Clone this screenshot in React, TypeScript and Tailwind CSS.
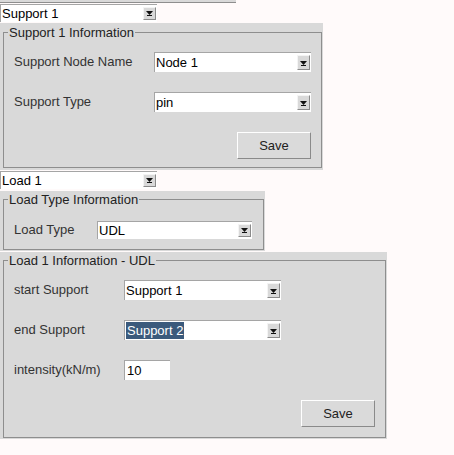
import type { ReactNode } from 'react';

/** Dropdown box with the little bevelled arrow button on the right */
function Combo({
  value,
  className,
  highlight = false,
}: {
  value: string;
  className: string;
  highlight?: boolean;
}) {
  return (
    <div className={`flex bg-white border-t border-l border-[#a5a5a5] ${className}`}>
      <div className="flex-1 flex items-center pl-[1px] overflow-hidden">
        {highlight ? (
          <span className="bg-[#3b5a7c] text-white leading-[17px] px-[1px]">{value}</span>
        ) : (
          <span className="text-black">{value}</span>
        )}
      </div>
      <div className="w-[13px] my-[2px] mr-[1px] flex items-end justify-center pb-[3px] bg-[#d9d9d9] border-l border-t border-[#f4f4f4] border-r border-b border-r-[#8a8a8a] border-b-[#8a8a8a]">
        <svg width="7" height="5" viewBox="0 0 7 5" fill="#111">
          <path d="M0 0h7L3.5 4z" />
          <rect x="1" y="4" width="5" height="1" />
        </svg>
      </div>
    </div>
  );
}

function SaveButton() {
  return (
    <button
      type="button"
      className="w-[74px] h-[27px] bg-[#dadada] border border-t-white border-l-white border-r-[#8a8a8a] border-b-[#8a8a8a] text-[#222]"
    >
      Save
    </button>
  );
}

function Group({ title, className, children }: { title: string; className: string; children: ReactNode }) {
  return (
    <fieldset className={`border border-[#8e8e8e] ${className}`}>
      <legend className="ml-[4px] px-[1px] leading-[15px] text-[#222]">{title}</legend>
      {children}
    </fieldset>
  );
}

function Row({ label, labelW, children, className = '' }: { label: string; labelW: string; children: ReactNode; className?: string }) {
  return (
    <div className={`flex items-center ${className}`}>
      <span className={`text-[#333] ${labelW}`}>{label}</span>
      {children}
    </div>
  );
}

export default function App() {
  return (
    <div className="min-h-[455px] bg-[#fffafa] font-['Liberation_Sans',Arial,sans-serif] text-[13px] flex flex-col items-start">
      {/* tail of the panel above */}
      <div className="w-[236px] h-[3px] bg-[#d9d9d9] border-b border-[#8e8e8e]" />

      <Combo value="Support 1" className="mt-[1px] w-[157px] h-[18px]" />

      {/* Support panel */}
      <div className="mt-[1px] w-[323px] bg-[#d9d9d9] pt-[2px] pb-[2px] pl-[3px]">
        <Group title="Support 1 Information" className="w-[319px] h-[143px]">
          <div className="pl-[10px] pt-[12px] flex flex-col">
            <Row label="Support Node Name" labelW="w-[140px]">
              <Combo value="Node 1" className="w-[157px] h-[20px]" />
            </Row>
            <Row label="Support Type" labelW="w-[140px]" className="mt-[20px]">
              <Combo value="pin" className="w-[157px] h-[20px]" />
            </Row>
            <div className="mt-[20px] w-[297px] flex justify-end">
              <SaveButton />
            </div>
          </div>
        </Group>
      </div>

      <Combo value="Load 1" className="mt-[1px] w-[157px] h-[18px]" />

      {/* Load type panel */}
      <div className="mt-[2px] w-[265px] bg-[#d9d9d9] pt-[1px] pb-[1px] pl-[3px]">
        <Group title="Load Type Information" className="w-[261px] h-[58px]">
          <div className="pl-[10px] pt-[13px]">
            <Row label="Load Type" labelW="w-[83px]">
              <Combo value="UDL" className="w-[155px] h-[18px]" />
            </Row>
          </div>
        </Group>
      </div>

      {/* Load detail panel */}
      <div className="mt-[1px] w-[387px] bg-[#d9d9d9] pt-[1px] pb-[1px] pl-[3px]">
        <Group title="Load 1 Information - UDL" className="w-[383px] h-[185px]">
          <div className="pl-[10px] pt-[12px] flex flex-col">
            <Row label="start Support" labelW="w-[110px]">
              <Combo value="Support 1" className="w-[157px] h-[20px]" />
            </Row>
            <Row label="end Support" labelW="w-[110px]" className="mt-[20px]">
              <Combo value="Support 2" className="w-[157px] h-[20px]" highlight />
            </Row>
            <Row label="intensity(kN/m)" labelW="w-[110px]" className="mt-[20px]">
              <input
                readOnly
                value="10"
                className="w-[46px] h-[20px] bg-white border-t border-l border-[#a5a5a5] pl-[2px] text-black outline-none"
              />
            </Row>
            <div className="mt-[20px] w-[361px] flex justify-end">
              <SaveButton />
            </div>
          </div>
        </Group>
      </div>
    </div>
  );
}
